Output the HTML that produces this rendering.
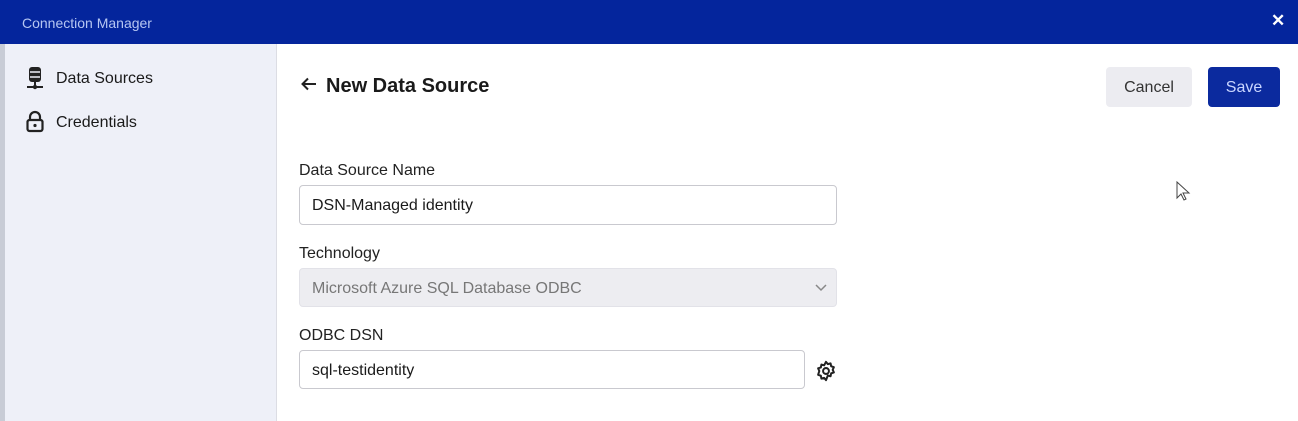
<!DOCTYPE html>
<html><head><style>
*{margin:0;padding:0;box-sizing:border-box}
body{width:1298px;height:421px;overflow:hidden;background:#fff;font-family:"Liberation Sans",sans-serif;position:relative;color:#1a1a1a}
.abs{position:absolute}
.bar{left:0;top:0;width:1298px;height:44px;background:#04259c}
.lbl{font-size:16px;color:#222}
.inp{border:1px solid #c9c9cf;border-radius:4px;background:#fff;font-size:16px;padding-left:12px;display:flex;align-items:center;padding-top:2px}
</style></head><body>
<div class="abs bar"></div>
<div class="abs" style="left:22px;top:15px;font-size:14px;color:#b6c6f2">Connection Manager</div>
<div class="abs" style="left:1271px;top:11px;font-size:17px;font-weight:bold;color:#fff">✕</div>
<div class="abs" style="left:0;top:44px;width:5px;height:377px;background:#c8ccd6"></div>
<div class="abs" style="left:5px;top:44px;width:272px;height:377px;background:#eef0f8;border-right:1px solid #dcdde4"></div>
<svg class="abs" style="left:24px;top:66px" width="22" height="24" viewBox="0 0 22 24"><rect x="5" y="1" width="12" height="15" rx="3" fill="#222"/><line x1="6" y1="6" x2="16" y2="6" stroke="#eef0f8" stroke-width="1.5"/><line x1="6" y1="11" x2="16" y2="11" stroke="#eef0f8" stroke-width="1.5"/><line x1="11" y1="16" x2="11" y2="21" stroke="#222" stroke-width="2"/><line x1="3" y1="21" x2="19" y2="21" stroke="#222" stroke-width="2"/><circle cx="11" cy="21" r="2.2" fill="#222"/></svg>
<div class="abs" style="left:56px;top:70px;font-size:16px">Data Sources</div>
<svg class="abs" style="left:24px;top:110px" width="22" height="24" viewBox="0 0 22 24"><path d="M6 10V7a5 5 0 0 1 10 0v3" fill="none" stroke="#222" stroke-width="2.2"/><rect x="3.5" y="10" width="15" height="11" rx="2" fill="none" stroke="#222" stroke-width="2.2"/><circle cx="11" cy="15.5" r="1.6" fill="#222"/></svg>
<div class="abs" style="left:56px;top:114px;font-size:16px">Credentials</div>
<svg class="abs" style="left:301px;top:77px" width="16" height="14" viewBox="0 0 16 14"><path d="M15 7H2M7 1.5L1.5 7 7 12.5" fill="none" stroke="#222" stroke-width="2"/></svg>
<div class="abs" style="left:326px;top:75px;font-size:20px;font-weight:bold">New Data Source</div>
<div class="abs" style="left:1106px;top:67px;width:86px;height:40px;background:#ececf1;border-radius:4px;font-size:16px;display:flex;align-items:center;justify-content:center;color:#333;padding-top:2px">Cancel</div>
<div class="abs" style="left:1208px;top:67px;width:72px;height:40px;background:#0b2a9e;border-radius:4px;font-size:16px;display:flex;align-items:center;justify-content:center;color:#c9d5ff;padding-top:2px">Save</div>
<div class="abs lbl" style="left:299px;top:162px">Data Source Name</div>
<div class="abs inp" style="left:299px;top:185px;width:538px;height:40px">DSN-Managed identity</div>
<div class="abs lbl" style="left:299px;top:245px">Technology</div>
<div class="abs inp" style="left:299px;top:268px;width:538px;height:39px;background:#ededf1;border-color:#e2e2e8;color:#777">Microsoft Azure SQL Database ODBC</div>
<svg class="abs" style="left:815px;top:284px" width="12" height="8" viewBox="0 0 12 8"><path d="M1 1l5 5 5-5" fill="none" stroke="#888" stroke-width="1.5"/></svg>
<div class="abs lbl" style="left:299px;top:327px">ODBC DSN</div>
<div class="abs inp" style="left:299px;top:350px;width:506px;height:39px">sql-testidentity</div>
<svg class="abs" style="left:815px;top:360px" width="22" height="22" viewBox="0 0 24 24"><path d="M12 2l2 2.5 3-.8.6 3.1 3 1-1.3 2.9 1.3 2.9-3 1-.6 3.1-3-.8L12 22l-2-2.5-3 .8-.6-3.1-3-1L4.7 12 3.4 9.1l3-1L7 5l3 .8z" fill="none" stroke="#222" stroke-width="2.2" stroke-linejoin="round"/><circle cx="12" cy="12" r="3.2" fill="none" stroke="#222" stroke-width="2.2"/></svg>
<svg class="abs" style="left:1176px;top:181px" width="16" height="22" viewBox="0 0 16 22"><path d="M1 1v16l4-4 3 6 2-1-3-6h6z" fill="#fff" stroke="#444" stroke-width="1"/></svg>
</body></html>
